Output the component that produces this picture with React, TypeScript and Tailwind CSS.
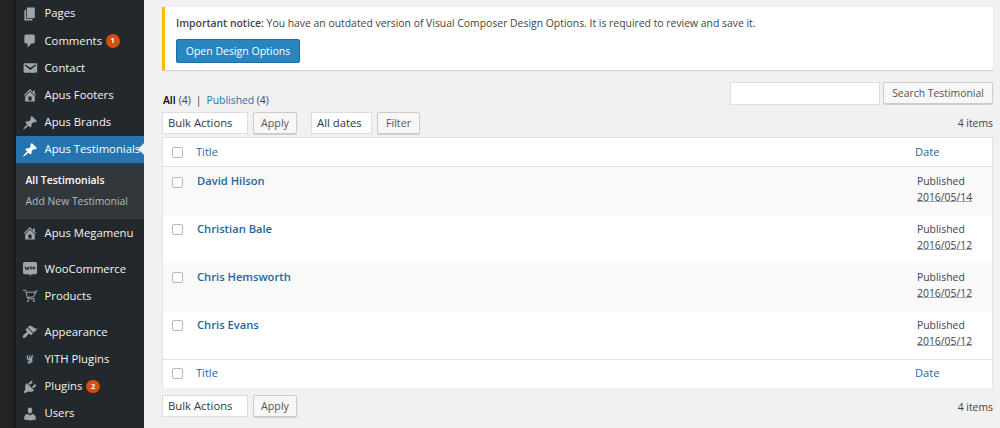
import type { ReactNode } from "react";

const icons = {
  page: "M6 15V2h10v13H6zm-1 1h8v2H3V5h2v11z",
  comments:
    "M5 2h9c1.1 0 2 .9 2 2v7c0 1.1-.9 2-2 2h-2l-5 5v-5H5c-1.1 0-2-.9-2-2V4c0-1.1.9-2 2-2z",
  email:
    "M3.87 4h13.25C18.37 4 19 4.59 19 5.79v8.42c0 1.19-.63 1.79-1.88 1.79H3.87c-1.25 0-1.88-.6-1.88-1.79V5.79c0-1.2.63-1.79 1.88-1.79zm6.62 8.6l6.74-5.53c.24-.2.43-.66.13-1.07-.29-.41-.82-.42-1.17-.17l-5.7 3.86L4.8 5.83c-.35-.25-.88-.24-1.17.17-.3.41-.11.87.13 1.07z",
  home: "M16 8.5l1.53 1.53-1.06 1.06L10 4.6l-6.47 6.49-1.06-1.06L10 2.5l4 4v-2h2v4zm-6-2.46l6 5.99V18H4v-5.97zM12 17v-5H8v5h4z",
  pin: "M10.44 3.02l1.82-1.82 6.36 6.35-1.83 1.82c-1.05-.68-2.48-.57-3.41.36l-.75.75c-.92.93-1.04 2.35-.35 3.41l-1.83 1.82-2.41-2.41-2.8 2.79c-.42.42-3.38 2.71-3.8 2.29s1.86-3.39 2.28-3.81l2.79-2.79L4.1 9.36l1.83-1.82c1.05.69 2.48.57 3.4-.36l.75-.75c.93-.92 1.05-2.35.36-3.41z",
  brush:
    "M14.48 11.06L7.41 3.99l1.5-1.5c.5-.56 2.3-.47 3.51.32 1.21.8 1.43 1.28 2.91 2.1 1.18.64 2.45 1.26 4.45.85zm-.71.71L6.7 4.7 4.93 6.47c-.39.39-.39 1.02 0 1.41l1.06 1.06c.39.39.39 1.03 0 1.42-.6.6-1.43 1.11-2.21 1.69-.35.26-.7.53-1.01.84C1.43 14.23.4 16.08 1.4 17.07c.99 1 2.84-.03 4.18-1.36.31-.31.58-.66.85-1.02.57-.78 1.08-1.61 1.69-2.21.39-.39 1.02-.39 1.41 0l1.06 1.06c.39.39 1.02.39 1.41 0z",
  plug: "M13.11 4.36L9.87 7.6 8 5.73l3.24-3.24c.35-.34 1.05-.2 1.56.32.52.51.66 1.21.31 1.55zm-8 1.77l.91-1.12 9.01 9.01-1.19.84c-.71.71-2.63 1.16-3.82 1.16H6.14L4.9 17.26c-.59.59-1.54.59-2.12 0-.59-.58-.59-1.53 0-2.12l1.24-1.24v-3.88c0-1.13.4-3.19 1.09-3.89zm7.26 3.97l3.24-3.24c.34-.35 1.04-.21 1.55.31.52.51.66 1.21.31 1.55l-3.24 3.25z",
  users:
    "M10 9.25c-2.27 0-2.73-3.44-2.73-3.44C7 4.02 7.82 2 9.97 2c2.16 0 2.98 2.02 2.71 3.81 0 0-.41 3.44-2.68 3.44zm0 2.57L12.72 10c2.39 0 4.52 2.33 4.52 4.53v2.49s-3.65 1.13-7.24 1.13c-3.65 0-7.24-1.13-7.24-1.13v-2.49c0-2.25 1.94-4.48 4.47-4.48z",
};

function Glyph({ name }: { name: keyof typeof icons }) {
  return (
    <svg viewBox="0 0 20 20" className="size-4" fill="currentColor">
      <path d={icons[name]} />
    </svg>
  );
}

function WooIcon() {
  return (
    <svg viewBox="0 0 16 16" className="size-4">
      <path
        d="M2.6 1h10.800A1.600 1.600 0 0 1 15 2.600v9a1.600 1.600 0 0 1-1.600 1.600H9.400l-.9 1.900-1.600-1.900H2.600A1.600 1.600 0 0 1 1 11.600v-9A1.600 1.600 0 0 1 2.600 1z"
        fill="#a0a5aa"
      />
      <path
        d="M3 5.400l1 3.400 1.300-2.500.9 2.500 1-3.400"
        fill="none"
        stroke="#23282d"
        strokeWidth="1"
      />
      <ellipse cx="9.200" cy="7" rx=".9" ry="1.300" fill="none" stroke="#23282d" strokeWidth=".9" />
      <ellipse cx="12" cy="7" rx=".9" ry="1.300" fill="none" stroke="#23282d" strokeWidth=".9" />
    </svg>
  );
}

function CartIcon() {
  return (
    <svg viewBox="0 0 16 16" className="size-4" fill="none" stroke="#a0a5aa">
      <path d="M1 2.200h2.700l2 8.600h7.300M4.200 4.200h9.600l-2.200 4.700-6.300.5" strokeWidth="1" />
      <path d="M13 6.400l1.200-3.700H15.500" strokeWidth="1" />
      <circle cx="5.900" cy="12.900" r="1" fill="#a0a5aa" stroke="none" />
      <circle cx="11.800" cy="12.900" r="1" fill="#a0a5aa" stroke="none" />
    </svg>
  );
}

function YithIcon() {
  return (
    <svg viewBox="0 0 16 16" className="size-4">
      <circle cx="8" cy="8" r="5.800" fill="#222d3d" />
      <path
        d="M5.400 4.500v2.700c0 1.600 3.400 1.600 4.300-.1M10.400 4.200L9.200 10c-.5 2.300-2.800 2.500-3.300 1M8 4.500L7.600 8M6.500 10h4"
        fill="none"
        stroke="#a0a5aa"
        strokeWidth="1.300"
      />
    </svg>
  );
}

function MenuItem({
  icon,
  label,
  badge,
  current,
}: {
  icon: ReactNode;
  label: string;
  badge?: number;
  current?: boolean;
}) {
  return (
    <li
      className={
        "relative flex h-[27.2px] items-center pl-1.5 text-[11.3px] font-medium " +
        (current ? "bg-[#2574af] text-white" : "text-[#f4f4f4]")
      }
    >
      <span className={"mr-[6.5px] shrink-0 " + (current ? "text-white" : "text-[#a0a5aa]")}>
        {icon}
      </span>
      <span className="whitespace-nowrap">{label}</span>
      {badge !== undefined && (
        <span className="ml-1 flex size-[13.5px] items-center justify-center rounded-full bg-[#d54e0f] text-[7.5px] font-bold text-white">
          {badge}
        </span>
      )}
      {current && (
        <span className="absolute top-[7px] right-0 border-y-[6.5px] border-r-[6.5px] border-y-transparent border-r-[#f1f1f1]" />
      )}
    </li>
  );
}

function Button({ className, children }: { className: string; children: ReactNode }) {
  return (
    <button
      className={
        "flex h-[22px] items-center justify-center rounded-[2px] border border-[#ccc] bg-[#f7f7f7] whitespace-nowrap text-[#555] shadow-[0_1px_0_#d0d0d0] " +
        className
      }
    >
      {children}
    </button>
  );
}

function Select({ className, children }: { className: string; children: ReactNode }) {
  return (
    <div
      className={
        "flex h-[22px] items-center border border-[#ddd] bg-white pl-[5px] text-[11.3px] whitespace-nowrap text-[#32373c] " +
        className
      }
    >
      {children}
    </div>
  );
}

function Checkbox() {
  return <span className="block size-[11px] rounded-[2px] border border-[#b4b9be] bg-white" />;
}

function HeadRow({ className }: { className: string }) {
  return (
    <div className={"flex items-center bg-white pl-[9px] text-[11.1px] text-[#1f6aa5] " + className}>
      <Checkbox />
      <span className="ml-[13px] flex-1">Title</span>
      <span className="w-[77px]">Date</span>
    </div>
  );
}

const rows = [
  { name: "David Hilson", date: "2016/05/14" },
  { name: "Christian Bale", date: "2016/05/12" },
  { name: "Chris Hemsworth", date: "2016/05/12" },
  { name: "Chris Evans", date: "2016/05/12" },
];

export default function App() {
  return (
    <div className="flex h-[428px] w-[1000px] overflow-hidden bg-[#f1f1f1] font-['Open_Sans',sans-serif] text-[10.4px] text-[#444]">
      <div className="w-4 shrink-0 bg-linear-to-r from-[#232323] from-65% to-[#171819]" />
      <nav className="w-32 shrink-0 bg-[#23282d]">
        <ul className="pt-[0.3px]">
          <MenuItem icon={<Glyph name="page" />} label="Pages" />
          <MenuItem icon={<Glyph name="comments" />} label="Comments" badge={1} />
          <MenuItem icon={<Glyph name="email" />} label="Contact" />
          <MenuItem icon={<Glyph name="home" />} label="Apus Footers" />
          <MenuItem icon={<Glyph name="pin" />} label="Apus Brands" />
          <MenuItem icon={<Glyph name="pin" />} label="Apus Testimonials" current />
        </ul>
        <ul className="flex h-[56px] flex-col bg-[#32373c] pt-[7px] pl-[9.5px] leading-[21px]">
          <li className="text-[10.4px] font-semibold text-white">All Testimonials</li>
          <li className="text-[10.4px] text-[#b4b9be]">Add New Testimonial</li>
        </ul>
        <ul>
          <MenuItem icon={<Glyph name="home" />} label="Apus Megamenu" />
        </ul>
        <ul className="mt-[8.8px]">
          <MenuItem icon={<WooIcon />} label="WooCommerce" />
          <MenuItem icon={<CartIcon />} label="Products" />
        </ul>
        <ul className="mt-[8.8px]">
          <MenuItem icon={<Glyph name="brush" />} label="Appearance" />
          <MenuItem icon={<YithIcon />} label="YITH Plugins" />
          <MenuItem icon={<Glyph name="plug" />} label="Plugins" badge={2} />
          <MenuItem icon={<Glyph name="users" />} label="Users" />
        </ul>
      </nav>

      <main className="flex min-w-0 flex-1 flex-col pt-[7px] pr-[7px] pl-[18px]">
        <section className="h-[63px] shrink-0 border-l-3 border-[#ffb900] bg-white pl-[11px] shadow-[0_1px_1px_rgba(0,0,0,0.14)]">
          <p className="pt-[7.5px] leading-4">
            <b className="font-semibold">Important notice:</b> You have an outdated version of
            Visual Composer Design Options. It is required to review and save it.
          </p>
          <button className="mt-[8.5px] flex h-6 w-[124px] items-center justify-center rounded-[2px] border border-[#1b6ea5] bg-[#2885bf] pt-px text-[10.5px] font-medium text-white">
            Open Design Options
          </button>
        </section>

        <div className="mt-3 flex h-[23px] shrink-0 items-start justify-between">
          <div className="flex items-center pt-[9.5px] pl-px leading-4">
            <b className="font-semibold text-black">All</b>
            <span className="ml-[3px]">(4)</span>
            <span className="mx-[5px]">|</span>
            <span className="text-[#2574af]">Published</span>
            <span className="ml-[2.5px]">(4)</span>
          </div>
          <div className="flex gap-[3px]">
            <input className="h-[23px] w-[150px] border border-[#ddd] bg-white" />
            <Button className="w-[110px] pt-px">Search Testimonial</Button>
          </div>
        </div>

        <div className="mt-[7px] flex h-[25px] shrink-0 items-start">
          <Select className="w-[86px]">Bulk Actions</Select>
          <Button className="ml-[5px] w-[44px] text-[10.7px]">Apply</Button>
          <Select className="ml-[14px] w-[61px]">All dates</Select>
          <Button className="ml-[5px] w-[43px] text-[10.7px]">Filter</Button>
          <span className="ml-auto pt-[3px] leading-4">4 items</span>
        </div>

        <section className="h-[251px] shrink-0 border border-[#e3e3e3] bg-white">
          <HeadRow className="h-[29px] border-b border-[#e1e1e1]" />
          {rows.map((row, i) => (
            <div
              key={row.name}
              className={
                "flex h-[47.9px] items-start pl-[9px] " + (i % 2 ? "bg-white" : "bg-[#f9f9f9]")
              }
            >
              <span className="pt-[9.6px]">
                <Checkbox />
              </span>
              <span className="ml-[14px] flex-1 pt-[6px] text-[11.2px] leading-4 font-semibold text-[#1f649f]">
                {row.name}
              </span>
              <span className="flex w-[75px] flex-col items-start pt-[6px] leading-4">
                <span>Published</span>
                <span className="h-[13px] border-b border-[#aaa] leading-4">{row.date}</span>
              </span>
            </div>
          ))}
          <HeadRow className="h-[29px] border-t border-[#e1e1e1]" />
        </section>

        <div className="mt-[7px] flex items-start">
          <Select className="w-[86px]">Bulk Actions</Select>
          <Button className="ml-[5px] w-[44px] pt-px text-[10.7px]">Apply</Button>
          <span className="ml-auto pt-[4px] leading-4">4 items</span>
        </div>
      </main>
    </div>
  );
}
